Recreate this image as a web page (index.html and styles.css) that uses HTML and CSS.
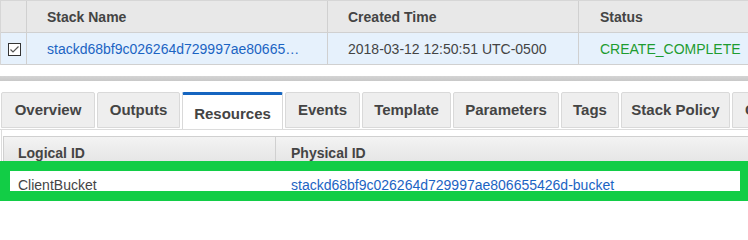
FILE: index.html
```html
<!DOCTYPE html>
<html>
<head>
<meta charset="utf-8">
<link rel="stylesheet" href="styles.css">
</head>
<body>
<div class="page">
<div class="stacks">
  <div class="row head">
    <div class="cell c-check"></div>
    <div class="cell c-name">Stack Name</div>
    <div class="cell c-time">Created Time</div>
    <div class="cell c-status">Status</div>
  </div>
  <div class="row data">
    <div class="cell c-check">
      <svg class="checkbox" width="13" height="13" viewBox="0 0 13 13">
        <rect x="0.5" y="0.5" width="12" height="12" fill="#fff" stroke="#333"/>
        <path d="M2.5 6.5 L5 9 L10.5 3.5" fill="none" stroke="#555" stroke-width="1.2"/>
      </svg>
    </div>
    <div class="cell c-name link">stackd68bf9c026264d729997ae80665…</div>
    <div class="cell c-time">2018-03-12 12:50:51 UTC-0500</div>
    <div class="cell c-status ok">CREATE_COMPLETE</div>
  </div>
</div>
<div class="splitter"></div>
<div class="tabs">
  <div class="tab">Overview</div>
  <div class="tab">Outputs</div>
  <div class="tab active">Resources</div>
  <div class="tab">Events</div>
  <div class="tab">Template</div>
  <div class="tab">Parameters</div>
  <div class="tab">Tags</div>
  <div class="tab">Stack Policy</div>
  <div class="tab">Change Sets</div>
</div>
<div class="panel">
  <div class="resources">
    <div class="rrow rhead">
      <div class="rcell r-logical">Logical ID</div>
      <div class="rcell r-physical">Physical ID</div>
    </div>
    <div class="rrow rdata">
      <div class="rcell r-logical">ClientBucket</div>
      <div class="rcell r-physical link">stackd68bf9c026264d729997ae806655426d-bucket</div>
    </div>
  </div>
</div>
<div class="highlight"></div>
</div>
</body>
</html>
```

FILE: styles.css
```css
html, body {
  margin: 0;
  padding: 0;
  background: #fff;
  font-family: "Liberation Sans", Arial, sans-serif;
  font-size: 14px;
  color: #444;
}

.page {
  position: relative;
  width: 748px;
  height: 201px;
  overflow: hidden;
}

.stacks {
  border-left: 1px solid #d6d6d6;
  border-top: 1px solid #d6d6d6;
}

.row {
  display: grid;
  grid-template-columns: 26px 301px 251px 1fr;
  height: 31px;
  border-bottom: 1px solid #d0d0d0;
}

.row.head {
  background: #e8e8e8;
  font-weight: bold;
  color: #444;
}

.row.data {
  background: #e6f1fc;
  color: #444;
}

.cell {
  display: flex;
  align-items: center;
  border-right: 1px solid #d0d0d0;
  white-space: nowrap;
  overflow: hidden;
}

.row.data .cell { padding-top: 1px; }

.c-check { justify-content: flex-start; padding-left: 7px; }
.c-name { padding-left: 20px; }
.c-time { padding-left: 20px; }
.c-status { padding-left: 21px; border-right: none; }

.checkbox { display: block; margin-top: 1px; }

.link { color: #1b64c3; }
.ok { color: #1e9c30; }

.splitter {
  height: 5px;
  margin-top: 11px;
  background: linear-gradient(#d4d4d4, #c8c8c8);
}

.tabs {
  display: flex;
  gap: 2px;
  margin-top: 11px;
  padding-left: 1px;
  height: 38px;
  box-sizing: border-box;
  border-bottom: 1px solid #dcdcdc;
  align-items: flex-start;
  overflow: hidden;
}

.tab {
  box-sizing: border-box;
  height: 36px;
  flex: none;
  background: #eeeeee;
  border: 1px solid #d9d9d9;
  border-radius: 2px 2px 0 0;
  display: flex;
  align-items: center;
  justify-content: center;
  font-weight: bold;
  font-size: 15px;
  color: #444;
  padding-bottom: 1px;
  white-space: nowrap;
  overflow: hidden;
}

.tab:nth-child(1) { width: 94px; }
.tab:nth-child(2) { width: 83px; }
.tab:nth-child(3) { width: 101px; }
.tab:nth-child(4) { width: 75px; }
.tab:nth-child(5) { width: 89px; }
.tab:nth-child(6) { width: 106px; }
.tab:nth-child(7) { width: 58px; }
.tab:nth-child(8) { width: 109px; }
.tab:nth-child(9) { width: 110px; justify-content: flex-start; padding-left: 12px; }

.tab.active {
  background: #fff;
  border-top: 3px solid #1565c0;
  border-bottom: none;
  height: 39px;
  position: relative;
  z-index: 1;
  padding-top: 1px;
  padding-bottom: 0;
}

.panel {
  margin-left: 1px;
  border-left: 1px solid #dcdcdc;
  padding: 6px 0 0 1px;
  height: 65px;
  overflow: hidden;
}

.resources {
  border-left: 1px solid #d0d0d0;
  border-top: 1px solid #d0d0d0;
}

.rrow {
  display: grid;
  grid-template-columns: 272px 1fr;
}

.rhead {
  height: 31px;
  background: linear-gradient(#f3f3f3, #e2e2e2);
  border-bottom: 1px solid #d0d0d0;
  font-weight: bold;
  color: #444;
}

.rhead .r-logical { border-right: 1px solid #d0d0d0; }

.rdata {
  height: 30px;
  background: #fff;
  color: #444;
}

.rcell {
  display: flex;
  align-items: center;
  white-space: nowrap;
}

.rhead .rcell { padding-top: 1px; }
.rdata .rcell { padding-top: 1px; }

.r-logical { padding-left: 14px; }
.rdata .r-logical { padding-right: 1px; }

.r-physical { padding-left: 15px; }

.highlight {
  position: absolute;
  left: 0;
  top: 161px;
  width: 748px;
  height: 40px;
  box-sizing: border-box;
  border: 10px solid #12cd46;
  border-right-width: 8px;
  z-index: 5;
}
```
